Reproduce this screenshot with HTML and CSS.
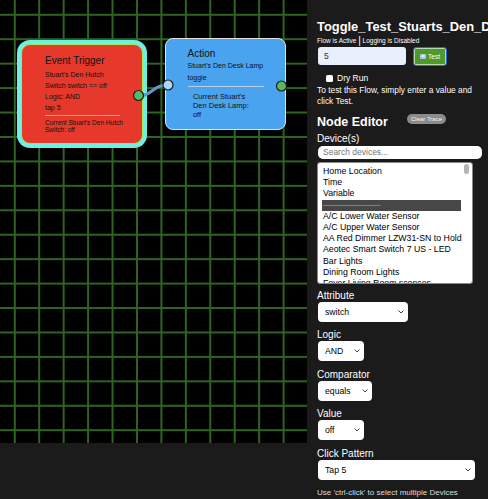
FILE: index.html
```html
<!DOCTYPE html>
<html lang="en">
<head>
    <meta charset="UTF-8">
    <meta name="viewport" content="width=device-width, initial-scale=1.0">
    <title>flow editor</title>
    <link rel="stylesheet" href="styles.css">
</head>
<body>
    <div id="app">
        <div id="canvas-col">
            <div id="canvas">
                <div class="node node-trigger">
                    <div class="node-title">Event Trigger</div>
                    <div class="node-line">Stuart's Den Hutch</div>
                    <div class="node-line">Switch switch == off</div>
                    <div class="node-line">Logic: AND</div>
                    <div class="node-line">tap 5</div>
                    <div class="node-rule"></div>
                    <div class="node-state">Current Stuart's Den Hutch<br>Switch: off</div>
                </div>
                <div class="node node-action">
                    <div class="node-title">Action</div>
                    <div class="node-line">Stuart's Den Desk Lamp</div>
                    <div class="node-line">toggle</div>
                    <div class="node-rule"></div>
                    <div class="node-state">Current Stuart's<br>Den Desk Lamp:<br>off</div>
                </div>
                <svg id="wires" width="307" height="443">
                    <path d="M143 95.5 C151 94 155 86 163 85.5" stroke="#6396cc" stroke-width="3" fill="none" stroke-linecap="round"/>
                    <circle cx="138.5" cy="95.5" r="5" fill="#5cb85c" stroke="#1d1d1d" stroke-width="1.2"/>
                    <circle cx="168" cy="85" r="5" fill="#aed6f6" stroke="#1d1d1d" stroke-width="1.2"/>
                    <circle cx="281.5" cy="86" r="5" fill="#5cb85c" stroke="#1d1d1d" stroke-width="1.2"/>
                </svg>
            </div>
        </div>
        <div id="panel">
            <div id="flow-title">Toggle_Test_Stuarts_Den_Desk_Lamp</div>
            <div id="flow-status">Flow is Active <span class="sep">|</span> Logging is Disabled</div>
            <div id="test-row">
                <div id="test-input">5</div>
                <div id="test-btn"><span class="play-icon"></span>Test</div>
            </div>
            <div id="dry-run"><span class="check"></span>Dry Run</div>
            <div id="test-help">To test this Flow, simply enter a value and click Test.</div>
            <div id="editor-head">
                <span id="editor-title">Node Editor</span>
                <span id="clear-trace">Clear Trace</span>
            </div>
            <div class="field-label">Device(s)</div>
            <div id="device-search">Search devices...</div>
            <div id="device-list">
                <div class="device-items">
                    <div class="device">Home Location</div>
                    <div class="device">Time</div>
                    <div class="device">Variable</div>
                    <div class="device device-sep"><span>──────────────────</span></div>
                    <div class="device">A/C Lower Water Sensor</div>
                    <div class="device">A/C Upper Water Sensor</div>
                    <div class="device">AA Red Dimmer LZW31-SN to Hold</div>
                    <div class="device">Aeotec Smart Switch 7 US - LED</div>
                    <div class="device">Bar Lights</div>
                    <div class="device">Dining Room Lights</div>
                    <div class="device">Foyer Living Room sconces</div>
                </div>
                <div class="list-scroll"><div class="list-thumb"></div></div>
            </div>
            <div class="field">
                <div class="field-label">Attribute</div>
                <div class="fake-select sel-attr"><span>switch</span><svg width="6" height="4"><path d="M0.5 0.5 L3 3 L5.5 0.5" stroke="#444" fill="none"/></svg></div>
            </div>
            <div class="field">
                <div class="field-label">Logic</div>
                <div class="fake-select sel-small"><span>AND</span><svg width="6" height="4"><path d="M0.5 0.5 L3 3 L5.5 0.5" stroke="#444" fill="none"/></svg></div>
            </div>
            <div class="field">
                <div class="field-label">Comparator</div>
                <div class="fake-select sel-comp"><span>equals</span><svg width="6" height="4"><path d="M0.5 0.5 L3 3 L5.5 0.5" stroke="#444" fill="none"/></svg></div>
            </div>
            <div class="field">
                <div class="field-label">Value</div>
                <div class="fake-select sel-small"><span>off</span><svg width="6" height="4"><path d="M0.5 0.5 L3 3 L5.5 0.5" stroke="#444" fill="none"/></svg></div>
            </div>
            <div class="field">
                <div class="field-label">Click Pattern</div>
                <div class="fake-select sel-wide"><span>Tap 5</span><svg width="6" height="4"><path d="M0.5 0.5 L3 3 L5.5 0.5" stroke="#444" fill="none"/></svg></div>
            </div>
            <div id="panel-note">Use 'ctrl-click' to select multiple Devices</div>
        </div>
    </div>
</body>
</html>
```

FILE: styles.css
```css
html, body {
    margin: 0;
    width: 488px;
    height: 499px;
    overflow: hidden;
}
body {
    background-color: #1b1b1b;
    color: white;
    font-family: "Liberation Sans", Arial, sans-serif;
}
#app {
    display: flex;
    height: 499px;
}
#canvas-col {
    width: 307px;
    flex: none;
}
#canvas {
    position: relative;
    height: 443px;
    background-color: #000;
    background-image:
        linear-gradient(to right, #2e6621 0, #2e6621 1.5px, transparent 1.5px),
        linear-gradient(to bottom, #2e6621 0, #2e6621 1.5px, transparent 1.5px);
    background-size: 24.45px 24.45px;
    background-position: 13.8px 13.8px;
    overflow: hidden;
}
.node {
    position: absolute;
    box-sizing: border-box;
    color: #111;
}
.node-trigger {
    left: 21px;
    top: 44px;
    width: 122px;
    height: 100px;
    background-color: #e7392b;
    border: 1px solid #a4e85a;
    border-radius: 9px;
    box-shadow: 0 0 0 4px #6cf2e2;
    padding: 10px 0 0 23px;
}
.node-action {
    left: 165px;
    top: 38px;
    width: 121px;
    height: 92px;
    background-color: #4aa3ef;
    border: 1px solid #e2e2e2;
    border-radius: 8px;
    padding: 8.5px 0 0 21.5px;
}
.node-title {
    font-size: 10px;
    line-height: 12px;
}
.node-line {
    font-size: 7px;
    line-height: 11.1px;
}
.node-trigger .node-title {
    margin-bottom: 1.7px;
}
.node-action .node-line {
    line-height: 12px;
}
.node-rule {
    width: 75px;
    height: 1.5px;
    background-color: #d8a2a0;
    margin-top: 1.5px;
}
.node-action .node-rule {
    width: 76px;
    background-color: #b9cfe4;
    margin-top: 2.2px;
}
.node-state {
    font-size: 6.5px;
    line-height: 7px;
    margin-top: 3.3px;
}
.node-action .node-state {
    font-size: 7.5px;
    line-height: 9px;
    margin-top: 5px;
    padding-left: 5.4px;
}
#wires {
    position: absolute;
    left: 0;
    top: 0;
}

#panel {
    flex: 1;
    min-width: 0;
    padding: 18.5px 0 0 10px;
    overflow: hidden;
}
#flow-title {
    font-size: 12.9px;
    line-height: 15px;
    font-weight: bold;
    white-space: nowrap;
}
#flow-status {
    margin-top: 2px;
    font-size: 6.5px;
    line-height: 10px;
    white-space: nowrap;
}
#flow-status .sep {
    font-size: 10px;
    vertical-align: -1px;
}
#test-row {
    display: flex;
    align-items: flex-start;
    gap: 7px;
    margin-top: 1.5px;
}
#test-input {
    box-sizing: border-box;
    width: 88px;
    height: 18px;
    margin-left: 1px;
    background-color: #e8f0fe;
    border-radius: 3px;
    color: #333;
    font-size: 8.5px;
    line-height: 18px;
    padding-left: 6px;
}
#test-btn {
    box-sizing: border-box;
    width: 34px;
    height: 19px;
    background-color: #4b9a2c;
    border: 1px solid #3261d4;
    border-radius: 3px;
    box-shadow: inset 0 0 0 1px #b9d7b0;
    font-size: 6.5px;
    display: flex;
    align-items: center;
    justify-content: center;
    gap: 2px;
}
.play-icon {
    position: relative;
    width: 6px;
    height: 5.5px;
    background-color: #b6c6e6;
    border-radius: 1px;
}
.play-icon::after {
    content: "";
    position: absolute;
    left: 2px;
    top: 1px;
    border-left: 3px solid white;
    border-top: 1.75px solid transparent;
    border-bottom: 1.75px solid transparent;
}
#dry-run {
    margin-top: 6.5px;
    font-size: 8.5px;
    line-height: 11px;
    display: flex;
    align-items: center;
    padding-left: 9px;
}
#dry-run .check {
    width: 7px;
    height: 7px;
    background-color: white;
    border-radius: 1.5px;
    margin-right: 4px;
}
#test-help {
    margin-top: 1px;
    font-size: 8.4px;
    line-height: 11px;
    width: 165px;
}
#editor-head {
    margin-top: 8px;
    display: flex;
    align-items: flex-start;
}
#editor-title {
    font-size: 12.5px;
    line-height: 15px;
    font-weight: bold;
    width: 90px;
}
#clear-trace {
    margin-top: -0.5px;
    height: 10px;
    padding: 0 4px;
    background-color: #8b8b8b;
    border-radius: 5px;
    font-size: 6px;
    line-height: 10px;
    color: #f4f4f4;
}
.field-label {
    font-size: 10px;
    line-height: 12px;
}
#editor-head + .field-label {
    margin-top: 3px;
}
#device-search {
    box-sizing: border-box;
    width: 164px;
    height: 13px;
    margin: 1.5px 0 0 1px;
    background-color: white;
    border-radius: 5px;
    color: #777;
    font-size: 8.5px;
    line-height: 13px;
    padding-left: 5px;
}
#device-list {
    box-sizing: border-box;
    display: flex;
    width: 156px;
    height: 122px;
    margin-top: 3px;
    background-color: white;
    border: 1px solid #888;
    border-radius: 3px;
    overflow: hidden;
    color: black;
}
.device-items {
    width: 139px;
    padding: 3px 0 0 4px;
}
.device {
    font-size: 8.75px;
    line-height: 11.2px;
    height: 11.2px;
    white-space: nowrap;
    padding-left: 1px;
}
.device-sep {
    background-color: #474747;
    color: #c4c4c4;
    font-family: "DejaVu Sans Mono", monospace;
    font-size: 5.3px;
    overflow: hidden;
}
.list-scroll {
    width: 7px;
    margin-left: 3px;
    padding-top: 1px;
}
.list-thumb {
    width: 5px;
    height: 10px;
    background-color: #b5b5b5;
    border-radius: 3px;
}
#device-list + .field {
    margin-top: 6px;
}
.field {
    margin-bottom: 7.4px;
}
.fake-select {
    box-sizing: border-box;
    height: 20px;
    margin-left: 1px;
    background-color: white;
    border-radius: 4px;
    color: black;
    font-size: 8.7px;
    display: flex;
    align-items: center;
    justify-content: space-between;
    padding: 0 4px 0 7px;
}
.sel-attr {
    width: 90px;
}
.sel-small {
    width: 46px;
}
.sel-comp {
    width: 54px;
}
.sel-wide {
    width: 157px;
}
#panel-note {
    margin-top: 2px;
    font-size: 8px;
    line-height: 11px;
    color: #ddd;
}
```
